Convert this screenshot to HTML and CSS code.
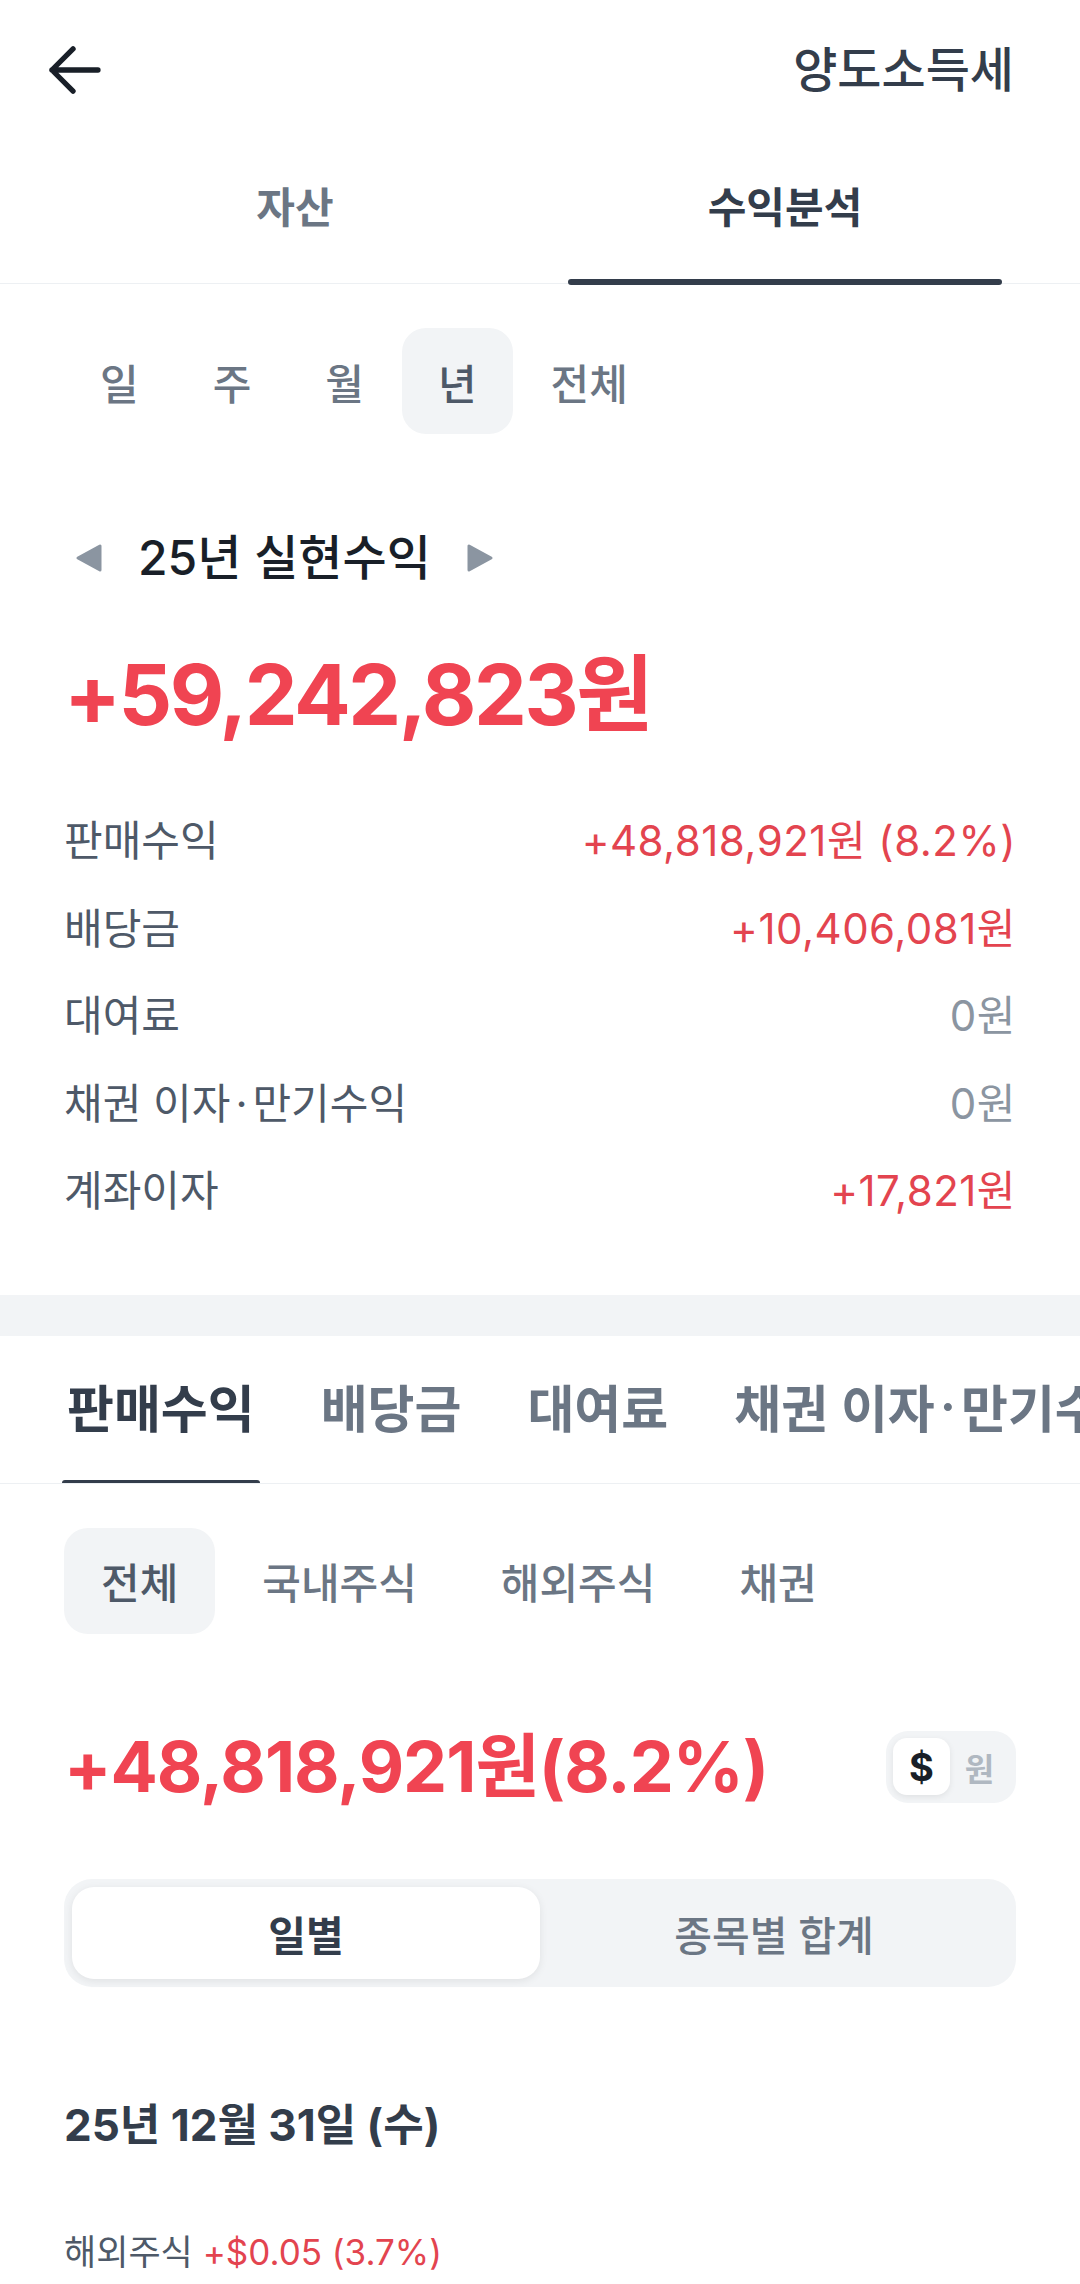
FILE: index.html
```html
<!DOCTYPE html>
<html lang="ko">
<head>
<meta charset="utf-8">
<title>양도소득세</title>
<link rel="stylesheet" href="styles.css">
</head>
<body>
<div class="page">
  <header class="topbar">
    <svg class="back" viewBox="0 0 56 50" aria-hidden="true">
      <path d="M53 25 H5 M27 3 L5 25 L27 47" fill="none" stroke="#191f28" stroke-width="5.5" stroke-linecap="round" stroke-linejoin="round"/>
    </svg>
    <div class="title">양도소득세</div>
  </header>

  <nav class="main-tabs">
    <div class="mtab">자산</div>
    <div class="mtab active">수익분석</div>
  </nav>

  <section class="summary">
    <div class="chips period">
      <div class="chip">일</div>
      <div class="chip">주</div>
      <div class="chip">월</div>
      <div class="chip on">년</div>
      <div class="chip">전체</div>
    </div>

    <div class="period-nav">
      <svg class="tri" viewBox="0 0 28 30" aria-hidden="true"><path d="M3 15 L25 3 L25 27 Z" fill="#8b95a1" stroke="#8b95a1" stroke-width="3" stroke-linejoin="round"/></svg>
      <span class="period-title">25년 실현수익</span>
      <svg class="tri" viewBox="0 0 28 30" aria-hidden="true"><path d="M25 15 L3 3 L3 27 Z" fill="#8b95a1" stroke="#8b95a1" stroke-width="3" stroke-linejoin="round"/></svg>
    </div>

    <div class="total">+59,242,823원</div>

    <div class="rows">
      <div class="row"><span class="label">판매수익</span><span class="val red">+48,818,921원 (8.2%)</span></div>
      <div class="row"><span class="label">배당금</span><span class="val red">+10,406,081원</span></div>
      <div class="row"><span class="label">대여료</span><span class="val zero">0원</span></div>
      <div class="row"><span class="label">채권 이자<span class="dot">·</span>만기수익</span><span class="val zero">0원</span></div>
      <div class="row"><span class="label">계좌이자</span><span class="val red">+17,821원</span></div>
    </div>
  </section>

  <div class="band"></div>

  <section class="detail">
    <nav class="sub-tabs">
      <div class="stab active">판매수익</div>
      <div class="stab">배당금</div>
      <div class="stab">대여료</div>
      <div class="stab">채권 이자<span class="dot">·</span>만기수익</div>
    </nav>

    <div class="inner">
      <div class="chips cats">
        <div class="chip on">전체</div>
        <div class="chip">국내주식</div>
        <div class="chip">해외주식</div>
        <div class="chip">채권</div>
      </div>

      <div class="amount-row">
        <div class="amount">+48,818,921원(8.2%)</div>
        <div class="toggle">
          <span class="t-on">$</span>
          <span class="t-off">원</span>
        </div>
      </div>

      <div class="seg">
        <div class="seg-item on">일별</div>
        <div class="seg-item">종목별 합계</div>
      </div>

      <div class="date">25년 12월 31일 (수)</div>

      <div class="entry"><span class="e-label">해외주식</span> <span class="e-val">+$0.05 (3.7%)</span></div>
    </div>
  </section>
</div>
</body>
</html>
```

FILE: styles.css
```css
* { box-sizing: border-box; }

html, body {
  margin: 0;
  padding: 0;
  background: #ffffff;
}

body {
  font-family: "Inter", "Noto Sans CJK KR", sans-serif;
  color: #191f28;
  width: 1080px;
  height: 2284px;
  overflow: hidden;
}

.page {
  width: 1080px;
}

/* header */
.topbar {
  height: 140px;
  display: flex;
  align-items: center;
  justify-content: space-between;
  padding: 0 66px 0 47px;
}

.back {
  width: 54px;
  height: 48px;
  display: block;
}

.title {
  font-size: 48px;
  font-weight: 500;
  color: #333d4b;
  line-height: 1;
}

/* main tabs */
.main-tabs {
  display: flex;
  height: 144px;
  padding: 0 50px;
  border-bottom: 1px solid #edf0f3;
}

.mtab {
  flex: 1;
  display: flex;
  align-items: center;
  justify-content: center;
  padding-bottom: 14px;
  font-size: 42px;
  font-weight: 600;
  color: #6b7684;
  position: relative;
}

.mtab.active {
  color: #333d4b;
  font-weight: 700;
}

.mtab.active::after {
  content: "";
  position: absolute;
  left: 28px;
  right: 28px;
  bottom: -2px;
  height: 6px;
  border-radius: 3px;
  background: #333d4b;
}

/* summary */
.summary {
  padding: 44px 64px 61px;
}

.chips {
  display: flex;
}

.chip {
  height: 106px;
  padding: 0 36px;
  display: flex;
  align-items: center;
  border-radius: 24px;
  font-size: 42px;
  font-weight: 500;
  color: #6b7684;
  white-space: nowrap;
}

.chip.on {
  background: #f2f4f6;
  color: #4e5968;
}

.period {
  gap: 2px;
}

.period-nav {
  margin-top: 94px;
  height: 60px;
  display: flex;
  align-items: center;
  padding-left: 11px;
}

.tri {
  width: 28px;
  height: 30px;
  display: block;
}

.period-title {
  margin: 0 35px;
  font-size: 48px;
  font-weight: 500;
  color: #191f28;
  line-height: 60px;
}

.total {
  margin-top: 57px;
  height: 100px;
  line-height: 100px;
  font-size: 84px;
  font-weight: 700;
  color: #f04452;
  letter-spacing: -2.5px;
}

.rows {
  margin-top: 49px;
  margin-bottom: 2px;
}

.row {
  height: 87.5px;
  display: flex;
  justify-content: space-between;
  align-items: center;
  font-size: 42px;
}

.label {
  color: #4e5968;
}

.dot {
  margin: 0 5px;
}

.val {
  letter-spacing: 0.5px;
}

.val.red {
  color: #e3444f;
}

.val.zero {
  color: #8b95a1;
}

.band {
  height: 41px;
  background: #f2f4f6;
}

/* detail */
.sub-tabs {
  height: 148px;
  display: flex;
  gap: 56px;
  padding-left: 62px;
  border-bottom: 1px solid #edf0f3;
  overflow: hidden;
  white-space: nowrap;
}

.stab {
  flex-shrink: 0;
  display: flex;
  align-items: center;
  padding: 0 5px 6px;
  font-size: 51px;
  font-weight: 600;
  color: #6b7684;
  position: relative;
}

.stab.active {
  color: #333d4b;
  font-weight: 700;
}

.stab.active::after {
  content: "";
  position: absolute;
  left: 0;
  right: 0;
  bottom: -3px;
  height: 6px;
  border-radius: 3px;
  background: #333d4b;
}

.inner {
  padding: 0 64px;
}

.cats {
  margin-top: 44px;
  gap: 10px;
}

.cats .chip {
  padding: 0 37px;
}

.amount-row {
  margin-top: 97px;
  height: 72px;
  display: flex;
  justify-content: space-between;
  align-items: center;
}

.amount {
  font-size: 70px;
  font-weight: 700;
  color: #f04452;
  letter-spacing: -1px;
  line-height: 1;
  white-space: nowrap;
}

.toggle {
  width: 130px;
  height: 72px;
  padding: 8px 7px;
  background: #f2f4f6;
  border-radius: 22px;
  display: flex;
  align-items: center;
}

.t-on {
  width: 57px;
  height: 57px;
  background: #ffffff;
  border-radius: 14px;
  box-shadow: 0 2px 6px rgba(0, 0, 0, 0.08);
  display: flex;
  align-items: center;
  justify-content: center;
  font-size: 38px;
  font-weight: 700;
  color: #191f28;
}

.t-off {
  flex: 1;
  text-align: center;
  font-size: 32px;
  font-weight: 700;
  color: #b0b8c1;
}

.seg {
  margin-top: 76px;
  height: 108px;
  padding: 8px;
  background: #f2f4f6;
  border-radius: 28px;
  display: flex;
}

.seg-item {
  flex: 1;
  display: flex;
  align-items: center;
  justify-content: center;
  font-size: 41px;
  font-weight: 500;
  color: #6b7684;
  border-radius: 22px;
}

.seg-item.on {
  background: #ffffff;
  color: #333d4b;
  font-weight: 600;
  box-shadow: 0 2px 8px rgba(0, 0, 0, 0.08);
}

.date {
  margin-top: 108px;
  height: 60px;
  line-height: 60px;
  font-size: 44px;
  font-weight: 700;
  color: #333d4b;
}

.entry {
  margin-top: 72px;
  height: 50px;
  line-height: 50px;
  font-size: 35px;
  white-space: nowrap;
}

.e-label {
  color: #4e5968;
}

.e-val {
  color: #e3444f;
}
```
